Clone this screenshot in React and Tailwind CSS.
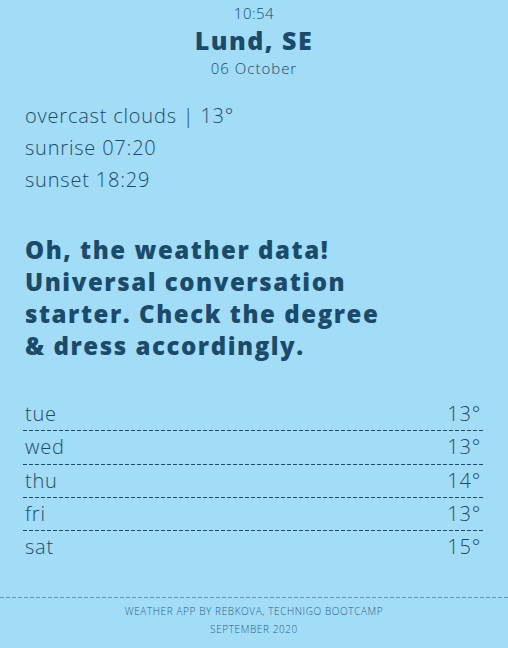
const forecast = [
  { day: "tue", temp: "13°" },
  { day: "wed", temp: "13°" },
  { day: "thu", temp: "14°" },
  { day: "fri", temp: "13°" },
  { day: "sat", temp: "15°" },
];

export default function App() {
  return (
    <div className="min-h-[648px] w-[508px] bg-[#a2dcf7] text-[#1b4b6b] font-['Open_Sans',sans-serif] flex flex-col">
      {/* header */}
      <header className="text-center pt-[3px]">
        <p className="text-[15px] leading-[20px] font-light tracking-[0.5px]">10:54</p>
        <h1 className="mt-[2px] text-[25px] leading-[30px] font-extrabold tracking-[1.5px]">Lund, SE</h1>
        <p className="mt-[3px] text-[15px] leading-[20px] font-light tracking-[1px]">06 October</p>
      </header>

      {/* current weather */}
      <section className="mt-[22px] pl-[25px] text-[20px] leading-[32px] font-light tracking-[0.04em]">
        <p>overcast clouds | 13°</p>
        <p>sunrise 07:20</p>
        <p>sunset 18:29</p>
      </section>

      <h2 className="mt-[38px] pl-[25px] text-[24px] leading-[32px] font-extrabold tracking-[0.065em]">
        Oh, the weather data!
        <br />
        Universal conversation
        <br />
        starter. Check the degree
        <br />& dress accordingly.
      </h2>

      {/* forecast list */}
      <ul className="mt-[36px] ml-[23px] w-[460px] text-[20px] font-light tracking-[0.04em]">
        {forecast.map((f, i) => (
          <li key={f.day}>
            <div className="flex justify-between items-center h-[32.33px] pl-[2px] pr-[2px]">
              <span>{f.day}</span>
              <span>{f.temp}</span>
            </div>
            {i < forecast.length - 1 && (
              <div className="h-px bg-[repeating-linear-gradient(90deg,#1b4b6b_0_4px,transparent_4px_6px)]" />
            )}
          </li>
        ))}
      </ul>

      <footer className="mt-auto pb-[10px] text-center text-[10px] leading-[18px] uppercase font-light tracking-[0.6px] text-[#2f5f7e]">
        <div className="h-px mb-[4px] bg-[repeating-linear-gradient(90deg,#5f93b3_0_4px,transparent_4px_6px)]" />
        <p>Weather app by Rebkova, Technigo bootcamp</p>
        <p>September 2020</p>
      </footer>
    </div>
  );
}
